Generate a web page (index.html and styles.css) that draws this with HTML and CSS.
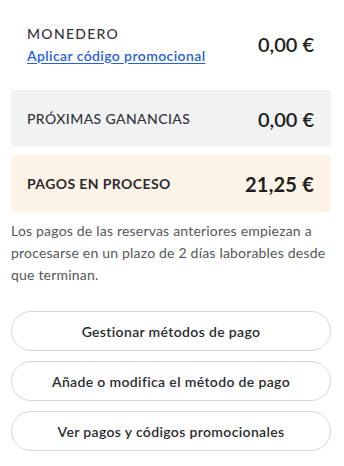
FILE: index.html
```html
<!DOCTYPE html>
<html lang="es">
<head>
<meta charset="utf-8">
<link rel="stylesheet" href="styles.css">
</head>
<body>
<div class="page">
  <div class="row wallet">
    <div class="left">
      <div class="label wide">MONEDERO</div>
      <a class="link" href="#">Aplicar código promocional</a>
    </div>
    <div class="amount">0,00 €</div>
  </div>
  <div class="row box gray">
    <div class="label">PRÓXIMAS GANANCIAS</div>
    <div class="amount">0,00 €</div>
  </div>
  <div class="row box peach">
    <div class="label strong">PAGOS EN PROCESO</div>
    <div class="amount bold">21,25 €</div>
  </div>
  <p class="note">Los pagos de las reservas anteriores empiezan a procesarse en un plazo de 2 días laborables desde que terminan.</p>
  <div class="buttons">
    <button class="btn">Gestionar métodos de pago</button>
    <button class="btn">Añade o modifica el método de pago</button>
    <button class="btn">Ver pagos y códigos promocionales</button>
  </div>
</div>
</body>
</html>
```

FILE: styles.css
```css
html, body {
  margin: 0;
  padding: 0;
  background: #ffffff;
}
body {
  font-family: Lato, "Noto Sans", sans-serif;
  color: #222325;
}
.page {
  width: 320px;
  margin-left: 11px;
  padding-top: 17px;
}
.row {
  display: flex;
  align-items: center;
  justify-content: space-between;
  padding: 0 17px 0 16px;
}
.wallet {
  height: 54px;
  margin-bottom: 19px;
}
.left {
  display: flex;
  flex-direction: column;
  gap: 5px;
}
.label {
  font-size: 14px;
  font-weight: 500;
  letter-spacing: 0.4px;
  color: #333437;
}
.label.wide {
  letter-spacing: 1.3px;
}
.label.strong {
  font-weight: 700;
  color: #2a2b2e;
}
.link {
  font-size: 14px;
  font-weight: 600;
  letter-spacing: 0.4px;
  color: #2a5fd6;
  text-decoration: underline;
  text-underline-offset: 2px;
}
.amount {
  font-size: 20px;
  font-weight: 600;
  color: #1d1e20;
  margin-top: -1px;
}
.amount.bold {
  font-weight: 700;
  letter-spacing: 0.2px;
}
.box .amount {
  margin-top: 0;
}
.box {
  height: 57px;
  border-radius: 4px;
  margin-bottom: 8px;
}
.gray {
  background: #f1f2f4;
}
.peach {
  background: #fdf4e7;
}
.note {
  margin: 7px 0 0 0;
  font-size: 14px;
  letter-spacing: 0.2px;
  line-height: 22px;
  color: #55575b;
}
.buttons {
  display: flex;
  flex-direction: column;
  gap: 10px;
  margin-top: 25px;
}
.btn {
  height: 40px;
  border: 1px solid #d3d7dd;
  border-radius: 20px;
  background: #ffffff;
  font-family: Lato, "Noto Sans", sans-serif;
  font-size: 14px;
  font-weight: 600;
  letter-spacing: 0.35px;
  color: #2a2b2e;
  padding: 0;
}
```
